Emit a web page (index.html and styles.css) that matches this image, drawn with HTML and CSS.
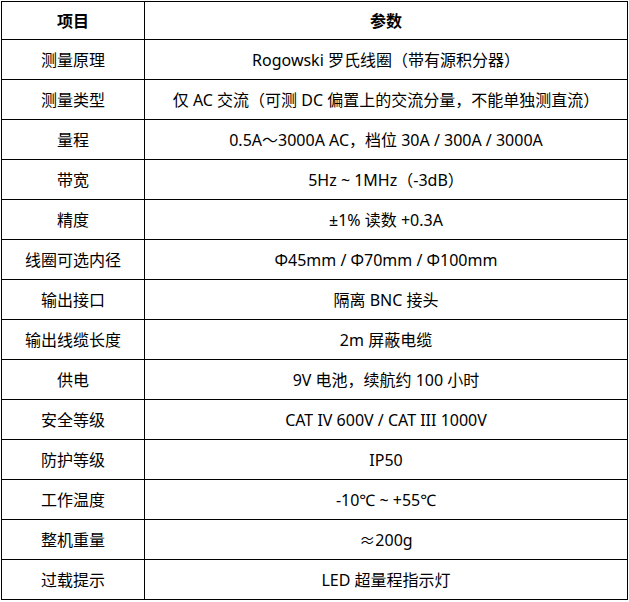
FILE: index.html
```html
<!DOCTYPE html>
<html lang="zh-CN">
<head>
<meta charset="utf-8">
<title>参数表</title>
<link rel="stylesheet" href="styles.css">
</head>
<body>
<table class="spec">
  <thead>
    <tr class="head"><th class="c1">项目</th><th class="c2">参数</th></tr>
  </thead>
  <tbody>
    <tr><td class="c1">测量原理</td><td class="c2">Rogowski 罗氏线圈（带有源积分器）</td></tr>
    <tr><td class="c1">测量类型</td><td class="c2">仅 AC 交流（可测 DC 偏置上的交流分量，不能单独测直流）</td></tr>
    <tr><td class="c1">量程</td><td class="c2">0.5A～3000A AC，档位 30A / 300A / 3000A</td></tr>
    <tr><td class="c1">带宽</td><td class="c2">5Hz ~ 1MHz（-3dB）</td></tr>
    <tr><td class="c1">精度</td><td class="c2">±1% 读数 +0.3A</td></tr>
    <tr><td class="c1">线圈可选内径</td><td class="c2">Φ45mm / Φ70mm / Φ100mm</td></tr>
    <tr><td class="c1">输出接口</td><td class="c2">隔离 BNC 接头</td></tr>
    <tr><td class="c1">输出线缆长度</td><td class="c2">2m 屏蔽电缆</td></tr>
    <tr><td class="c1">供电</td><td class="c2">9V 电池，续航约 100 小时</td></tr>
    <tr><td class="c1">安全等级</td><td class="c2">CAT IV 600V / CAT III 1000V</td></tr>
    <tr><td class="c1">防护等级</td><td class="c2">IP50</td></tr>
    <tr><td class="c1">工作温度</td><td class="c2">-10℃ ~ +55℃</td></tr>
    <tr><td class="c1">整机重量</td><td class="c2">≈200g</td></tr>
    <tr><td class="c1">过载提示</td><td class="c2">LED 超量程指示灯</td></tr>
  </tbody>
</table>
</body>
</html>
```
FILE: styles.css
```css
html, body {
  margin: 0;
  padding: 0;
  background: #fff;
}
body {
  padding: 1px 0 0 1px;
  font-family: "Noto Sans", "Noto Sans CJK SC", sans-serif;
  font-size: 16px;
  color: #000;
}
.spec {
  border-collapse: separate;
  border-spacing: 0;
  border-top: 1px solid #000;
  border-left: 1px solid #000;
  table-layout: fixed;
  width: 627px;
}
.spec th, .spec td {
  box-sizing: border-box;
  border-right: 1px solid #000;
  border-bottom: 1px solid #000;
  padding: 0 2px;
  height: 40px;
  text-align: center;
  vertical-align: middle;
  line-height: 20px;
  white-space: nowrap;
}
.spec .head th {
  height: 38px;
  font-weight: bold;
}
.spec .c1 { width: 143px; }
.spec .c2 { width: 483px; }
```
